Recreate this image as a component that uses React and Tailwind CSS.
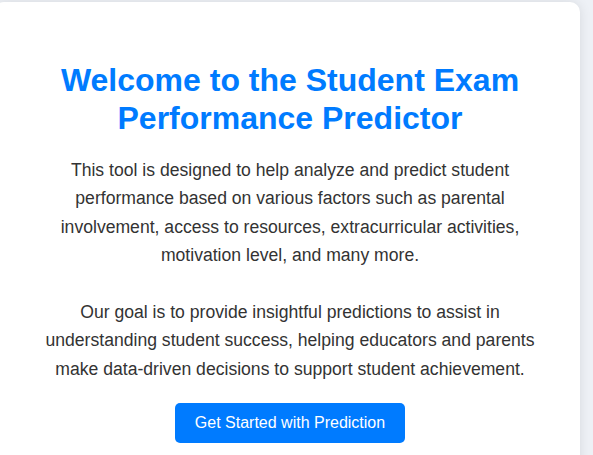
export default function App() {
  return (
    <main className="min-h-screen bg-[#eef1f6] pt-[2px] font-['Liberation_Sans',Arial,sans-serif]">
      <section className="-ml-[6px] w-[586px] rounded-[10px] bg-white pl-[46px] pr-[40px] pt-[59px] pb-[40px] text-center shadow-[0_0_12px_rgba(0,0,0,0.1)]">
        <h1 className="text-[32px] font-bold leading-[38.4px] text-[#007bff]">
          Welcome to the Student Exam Performance Predictor
        </h1>

        <p className="mt-[18px] text-[17.6px] leading-[28.4px] text-[#333]">
          This tool is designed to help analyze and predict student performance based on various factors such as
          parental involvement, access to resources, extracurricular activities, motivation level, and many more.
        </p>
        <p className="mt-[28.4px] text-[17.6px] leading-[28.4px] text-[#333]">
          Our goal is to provide insightful predictions to assist in understanding student success, helping
          educators and parents make data-driven decisions to support student achievement.
        </p>

        <button className="mt-[20px] h-[40px] w-[230px] rounded-[5px] bg-[#007bff] text-[16px] text-white">
          Get Started with Prediction
        </button>
      </section>
    </main>
  );
}
